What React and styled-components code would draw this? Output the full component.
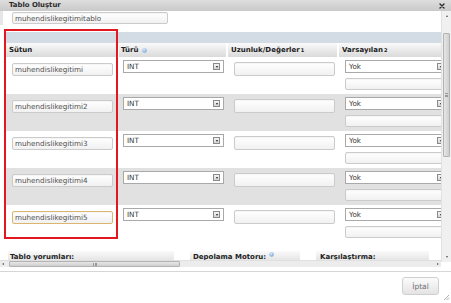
import React from "react";
import styled, { createGlobalStyle } from "styled-components";

const GlobalStyle = createGlobalStyle`
  html, body { margin: 0; padding: 0; background: #fff; }
  body { font-family: "DejaVu Sans", Verdana, sans-serif; }
  #root { width: 451px; height: 303px; }
  * { box-sizing: border-box; }
`;

const Dialog = styled.div`
  width: 451px;
  height: 303px;
  display: flex;
  flex-direction: column;
  overflow: hidden;
  background: #fff;
`;

const TitleBar = styled.div`
  flex: none;
  height: 11px;
  display: flex;
  align-items: center;
  justify-content: space-between;
  padding: 0 6px 0 9px;
  background: linear-gradient(#dedede, #c9c9c9);
  font-weight: bold;
  font-size: 6.9px;
  line-height: 11px;
  color: #2a2a2a;
`;

const Body = styled.div`
  flex: none;
  height: 260px;
  display: flex;
`;

const Main = styled.div`
  flex: 1;
  min-width: 0;
  display: flex;
  flex-direction: column;
  padding-bottom: 4px;
`;

const Viewport = styled.div`
  position: relative;
  flex: 1;
  overflow: hidden;
`;

const NameRow = styled.div`
  height: 14px;
  display: flex;
  align-items: flex-start;
  padding: 1px 0 0 9px;
  border-left: 3px solid #e6e6e6;
`;

const TextField = styled.input`
  display: block;
  width: ${(p) => p.$w || 101}px;
  height: ${(p) => p.$h || 13}px;
  margin: 0;
  padding: 0 0 0 2px;
  font-family: "DejaVu Sans", Verdana, sans-serif;
  font-size: 7.2px;
  color: #505050;
  border: 1px solid ${(p) => (p.$focus ? "#dcb571" : "#cbcbcb")};
  border-radius: 2px;
  background: linear-gradient(#ffffff, #f1f1f1);
  box-shadow: inset 0 1px 1px rgba(0, 0, 0, 0.04);
  outline: none;
`;

const Table = styled.div`
  margin: 7px 0 0 6px;
  width: 500px;
`;

const Band = styled.div`
  height: 11px;
  background: #d3dce5;
`;

const cols = "111px 107px 109px 167px";

const HeaderRow = styled.div`
  display: grid;
  grid-template-columns: ${cols};
  column-gap: 2px;
  height: 14px;
`;

const Th = styled.div`
  padding-left: ${(p) => p.$pl ?? 3}px;
  background: linear-gradient(#fafafa, #dadada);
  font-weight: bold;
  font-size: 7px;
  line-height: 14px;
  color: #222;
  white-space: nowrap;
  display: flex;
  align-items: center;

  sup {
    font-size: 5px;
    line-height: 0;
    position: relative;
    top: -0.5px;
    vertical-align: super;
    margin-left: 1px;
  }
`;

const Row = styled.div`
  display: grid;
  grid-template-columns: ${cols};
  column-gap: 2px;
  height: 37px;
  background: ${(p) => (p.$alt ? "#e1e1e1" : "#ffffff")};
`;

const Cell = styled.div`
  padding-left: ${(p) => p.$pl}px;
  padding-top: ${(p) => p.$pt}px;
  display: flex;
  flex-direction: column;
  gap: 5px;
`;

const SelectBox = styled.div`
  position: relative;
  width: ${(p) => p.$w || 101}px;
  height: 13px;
  border: 1px solid #a9a9a9;
  background: #fff;
  font-size: 7.2px;
  line-height: 11px;
  padding-left: 3px;
  color: #333;
`;

const Arrow = styled.span`
  position: absolute;
  right: 3px;
  top: 2px;
  width: 7px;
  height: 7px;
  border: 1px solid #8a8a8a;
  background: linear-gradient(#f4f4f4, #d4d4d4);
  display: flex;
  align-items: center;
  justify-content: center;

  &::after {
    content: "";
    border-left: 1.5px solid transparent;
    border-right: 1.5px solid transparent;
    border-top: 2px solid #222;
  }
`;

const BottomTable = styled.div`
  margin: 9px 0 0 8px;
  display: grid;
  grid-template-columns: 166px 110px 113px;
  column-gap: 16px;
`;

const BottomTh = styled(Th)`
  height: 14px;
  align-items: flex-start;
  line-height: 12px;
  padding-left: ${(p) => p.$pl}px;
`;

const RedFrame = styled.div`
  position: absolute;
  left: 4px;
  top: 18px;
  width: 114px;
  height: 210px;
  border: 2px solid #e3171f;
  pointer-events: none;
`;

const HScroll = styled.div`
  flex: none;
  height: 7px;
  display: flex;
  align-items: center;
  background: #ececec;
  border-top: 1px solid #e0e0e0;
  padding: 0 2px;
`;

const HThumb = styled.div`
  margin-left: 5px;
  width: 171px;
  height: 6px;
  border: 1px solid #b3b3b3;
  border-radius: 1px;
  background: linear-gradient(#e6e6e6, #cfcfcf);
  display: flex;
  align-items: center;
  justify-content: center;
`;

const Grip = styled.span`
  width: 4px;
  height: 3px;
  border-left: 1px solid #999;
  border-right: 1px solid #999;
  background: linear-gradient(90deg, transparent 1px, #999 1px, #999 2px, transparent 2px);
`;

const GripV = styled.span`
  width: 3px;
  height: 4px;
  border-top: 1px solid #999;
  border-bottom: 1px solid #999;
  background: linear-gradient(transparent 1px, #999 1px, #999 2px, transparent 2px);
`;

const ArrowGlyph = styled.span`
  width: 0;
  height: 0;
  flex: none;
  ${(p) =>
    p.$dir === "left"
      ? "border-top: 1.5px solid transparent; border-bottom: 1.5px solid transparent; border-right: 2px solid #555;"
      : p.$dir === "right"
      ? "border-top: 1.5px solid transparent; border-bottom: 1.5px solid transparent; border-left: 2px solid #555;"
      : p.$dir === "up"
      ? "border-left: 1.5px solid transparent; border-right: 1.5px solid transparent; border-bottom: 2px solid #555;"
      : "border-left: 1.5px solid transparent; border-right: 1.5px solid transparent; border-top: 2px solid #555;"}
`;

const Spacer = styled.div`
  flex: 1;
`;

const VScroll = styled.div`
  flex: none;
  width: 10px;
  height: 251px;
  display: flex;
  flex-direction: column;
  align-items: center;
  background: #f0f0f0;
  border-left: 1px solid #e2e2e2;
  padding: 4px 0 4px;
`;

const VThumb = styled.div`
  margin-top: 16px;
  width: 7px;
  height: 124px;
  border: 1px solid #b3b3b3;
  border-radius: 1px;
  background: linear-gradient(90deg, #e6e6e6, #cfcfcf);
  display: flex;
  align-items: center;
  justify-content: center;
`;

const Footer = styled.div`
  flex: 1;
  border-top: 1px solid #d6d6d6;
  display: flex;
  justify-content: flex-end;
  align-items: flex-start;
  padding: 5px 12px 0 0;
  position: relative;
`;

const Button = styled.button`
  width: 37px;
  height: 18px;
  margin: 0;
  padding: 0;
  border: 1px solid #cfcfcf;
  border-radius: 3px;
  background: linear-gradient(#fbfbfb, #e3e3e3);
  font-family: "DejaVu Sans", Verdana, sans-serif;
  font-size: 7.5px;
  color: #707070;
`;

const ResizeGrip = styled.svg`
  position: absolute;
  right: 1px;
  bottom: 2px;
`;

const InfoIcon = () => (
  <svg width="5" height="5" viewBox="0 0 5 5" style={{ marginLeft: 3, marginTop: 1 }}>
    <defs>
      <radialGradient id="ig" cx="0.4" cy="0.35" r="0.7">
        <stop offset="0" stopColor="#dbeafb" />
        <stop offset="1" stopColor="#6e9fd6" />
      </radialGradient>
    </defs>
    <circle cx="2.5" cy="2.5" r="2.3" fill="url(#ig)" />
  </svg>
);

const CloseIcon = () => (
  <svg width="6" height="6" viewBox="0 0 6 6">
    <path d="M1 1 L5 5 M5 1 L1 5" stroke="#2b2b2b" strokeWidth="1.4" strokeLinecap="round" />
  </svg>
);

const columns = [
  "muhendislikegitimi",
  "muhendislikegitimi2",
  "muhendislikegitimi3",
  "muhendislikegitimi4",
  "muhendislikegitimi5",
];

export default function App() {
  return (
    <>
      <GlobalStyle />
      <Dialog>
        <TitleBar>
          <span>Tablo Oluştur</span>
          <CloseIcon />
        </TitleBar>
        <Body>
          <Main>
            <Viewport>
              <NameRow>
                <TextField $w={156} $h={12} readOnly value="muhendislikegitimitablo" />
              </NameRow>
              <Table>
                <Band />
                <HeaderRow>
                  <Th>Sütun</Th>
                  <Th $pl={2}>
                    Türü
                    <InfoIcon />
                  </Th>
                  <Th>
                    Uzunluk/Değerler<sup>1</sup>
                  </Th>
                  <Th>
                    Varsayılan<sup>2</sup>
                  </Th>
                </HeaderRow>
                {columns.map((name, i) => (
                  <Row key={name} $alt={i % 2 === 1}>
                    <Cell $pl={6} $pt={6}>
                      <TextField readOnly value={name} $focus={i === 4} />
                    </Cell>
                    <Cell $pl={4} $pt={3}>
                      <SelectBox>
                        INT
                        <Arrow />
                      </SelectBox>
                    </Cell>
                    <Cell $pl={6} $pt={5}>
                      <TextField readOnly value="" $h={14} />
                    </Cell>
                    <Cell $pl={6} $pt={3}>
                      <SelectBox $w={103}>
                        Yok
                        <Arrow />
                      </SelectBox>
                      <TextField readOnly value="" $w={103} $h={12} />
                    </Cell>
                  </Row>
                ))}
              </Table>
              <BottomTable>
                <BottomTh $pl={2}>Tablo yorumları:</BottomTh>
                <BottomTh $pl={3}>
                  Depolama Motoru:
                  <InfoIcon />
                </BottomTh>
                <BottomTh $pl={4}>Karşılaştırma:</BottomTh>
              </BottomTable>
              <RedFrame />
            </Viewport>
            <HScroll>
              <ArrowGlyph $dir="left" />
              <HThumb>
                <Grip />
              </HThumb>
              <Spacer />
              <ArrowGlyph $dir="right" />
            </HScroll>
          </Main>
          <VScroll>
            <ArrowGlyph $dir="up" />
            <VThumb>
              <GripV />
            </VThumb>
            <Spacer />
            <ArrowGlyph $dir="down" />
          </VScroll>
        </Body>
        <Footer>
          <Button>İptal</Button>
          <ResizeGrip width="7" height="7" viewBox="0 0 7 7">
            <path d="M6 1 L1 6 M6 3.5 L3.5 6 M6 5.5 L5.5 6" stroke="#9a9a9a" strokeWidth="0.8" />
          </ResizeGrip>
        </Footer>
      </Dialog>
    </>
  );
}
